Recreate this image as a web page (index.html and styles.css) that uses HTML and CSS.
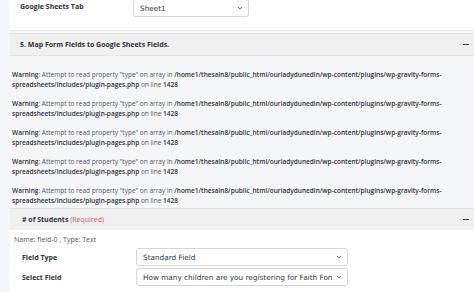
FILE: index.html
```html
<!DOCTYPE html>
<html lang="en">
<head>
    <meta charset="UTF-8">
    <title>Google Sheets Mapping</title>
    <link rel="stylesheet" href="styles.css">
</head>
<body>

    <!-- Sheet tab setting -->
    <div class="settings">
        <div class="row">
            <label>Google Sheets Tab</label>
            <div class="select select-sm">
                <span>Sheet1</span>
                <svg class="chev" viewBox="0 0 8 5"><path d="M1 1l3 3 3-3"/></svg>
            </div>
        </div>
    </div>

    <div class="section-head">
        <span>5. Map Form Fields to Google Sheets Fields.</span>
        <span class="toggle"></span>
    </div>

    <!-- PHP warnings dumped into the page -->
    <div class="warnings">
        <p><b>Warning</b>: Attempt to read property "type" on array in <b>/home1/thesain8/public_html/ourladydunedin/wp-content/plugins/wp-gravity-forms-<br>spreadsheets/includes/plugin-pages.php</b> on line <b>1428</b></p>
        <p><b>Warning</b>: Attempt to read property "type" on array in <b>/home1/thesain8/public_html/ourladydunedin/wp-content/plugins/wp-gravity-forms-<br>spreadsheets/includes/plugin-pages.php</b> on line <b>1428</b></p>
        <p><b>Warning</b>: Attempt to read property "type" on array in <b>/home1/thesain8/public_html/ourladydunedin/wp-content/plugins/wp-gravity-forms-<br>spreadsheets/includes/plugin-pages.php</b> on line <b>1428</b></p>
        <p><b>Warning</b>: Attempt to read property "type" on array in <b>/home1/thesain8/public_html/ourladydunedin/wp-content/plugins/wp-gravity-forms-<br>spreadsheets/includes/plugin-pages.php</b> on line <b>1428</b></p>
        <p><b>Warning</b>: Attempt to read property "type" on array in <b>/home1/thesain8/public_html/ourladydunedin/wp-content/plugins/wp-gravity-forms-<br>spreadsheets/includes/plugin-pages.php</b> on line <b>1428</b></p>
    </div>

    <!-- Field mapping box -->
    <div class="field-box">
        <div class="field-head">
            <span># of Students <span class="req">(Required)</span></span>
            <span class="toggle"></span>
        </div>
        <div class="field-body">
            <div class="meta">Name: field-0 , Type: Text</div>
            <div class="field-row">
                <label>Field Type</label>
                <div class="select">
                    <span>Standard Field</span>
                    <svg class="chev" viewBox="0 0 8 5"><path d="M1 1l3 3 3-3"/></svg>
                </div>
            </div>
            <div class="field-row">
                <label>Select Field</label>
                <div class="select">
                    <span>How many children are you registering for Faith Fon</span>
                    <svg class="chev" viewBox="0 0 8 5"><path d="M1 1l3 3 3-3"/></svg>
                </div>
            </div>
        </div>
    </div>

</body>
</html>
```

FILE: styles.css
```css
/* Styles for the page */
body {
    margin: 0;
    padding: 0;
    background: #f4f6f9;
    font-family: 'Open Sans', 'Noto Sans', sans-serif;
    font-size: 7px;
    color: #2c3338;
    overflow: hidden;
}

.settings {
    margin-left: 10px;
    height: 30px;
    background: #ffffff;
    border-bottom: 1px solid #e6e8eb;
}

.settings .row {
    display: flex;
    align-items: flex-start;
}

.settings label {
    font-weight: bold;
    width: 113px;
    padding-left: 10px;
    padding-top: 2px;
    line-height: 10px;
}

.select {
    display: flex;
    align-items: center;
    justify-content: space-between;
    box-sizing: border-box;
    height: 18px;
    padding: 0 5px 0 6px;
    background: #ffffff;
    border: 1px solid #d5d7da;
    border-radius: 3px;
    font-family: 'DejaVu Sans', sans-serif;
    font-size: 7.3px;
    color: #32373c;
    white-space: nowrap;
    overflow: hidden;
}

.select-sm {
    width: 116px;
    height: 18px;
    margin-top: -1px;
}

.chev {
    width: 6px;
    height: 4px;
    flex: none;
    fill: none;
    stroke: #50575e;
    stroke-width: 1.2;
}

.section-head {
    display: flex;
    align-items: center;
    justify-content: space-between;
    margin: 2px 0 0 10px;
    height: 21px;
    padding: 0 5px 0 10px;
    background: #f0f0f1;
    border-top: 1px solid #e4e5e7;
    border-bottom: 1px solid #e4e5e7;
    font-weight: bold;
}

.toggle {
    width: 6px;
    height: 1.5px;
    background: #3c434a;
}

.warnings {
    padding: 5px 0 0 12px;
}

.warnings p {
    margin: 9px 0 0;
    line-height: 10px;
    font-size: 6.5px;
    white-space: nowrap;
    color: #50575e;
}

.warnings b {
    font-weight: 600;
    color: #2c3338;
}

.field-box {
    margin: 2px 0 0 10px;
}

.field-head {
    display: flex;
    align-items: center;
    justify-content: space-between;
    height: 21px;
    padding: 0 5px 0 12px;
    background: #f0f0f1;
    border-top: 1px solid #e4e5e7;
    font-weight: bold;
}

.req {
    font-weight: normal;
    color: #e2556a;
}

.field-body {
    background: #ffffff;
    padding: 5px 0 10px 4px;
    height: 60px;
}

.meta {
    color: #50575e;
    line-height: 10px;
}

.field-row {
    display: flex;
    align-items: center;
    margin-top: 3px;
}

.field-row + .field-row {
    margin-top: 2px;
}

.field-row label {
    font-weight: bold;
    width: 114px;
    padding-left: 8px;
}

.field-row .select {
    width: 212px;
    height: 18px;
}
```
